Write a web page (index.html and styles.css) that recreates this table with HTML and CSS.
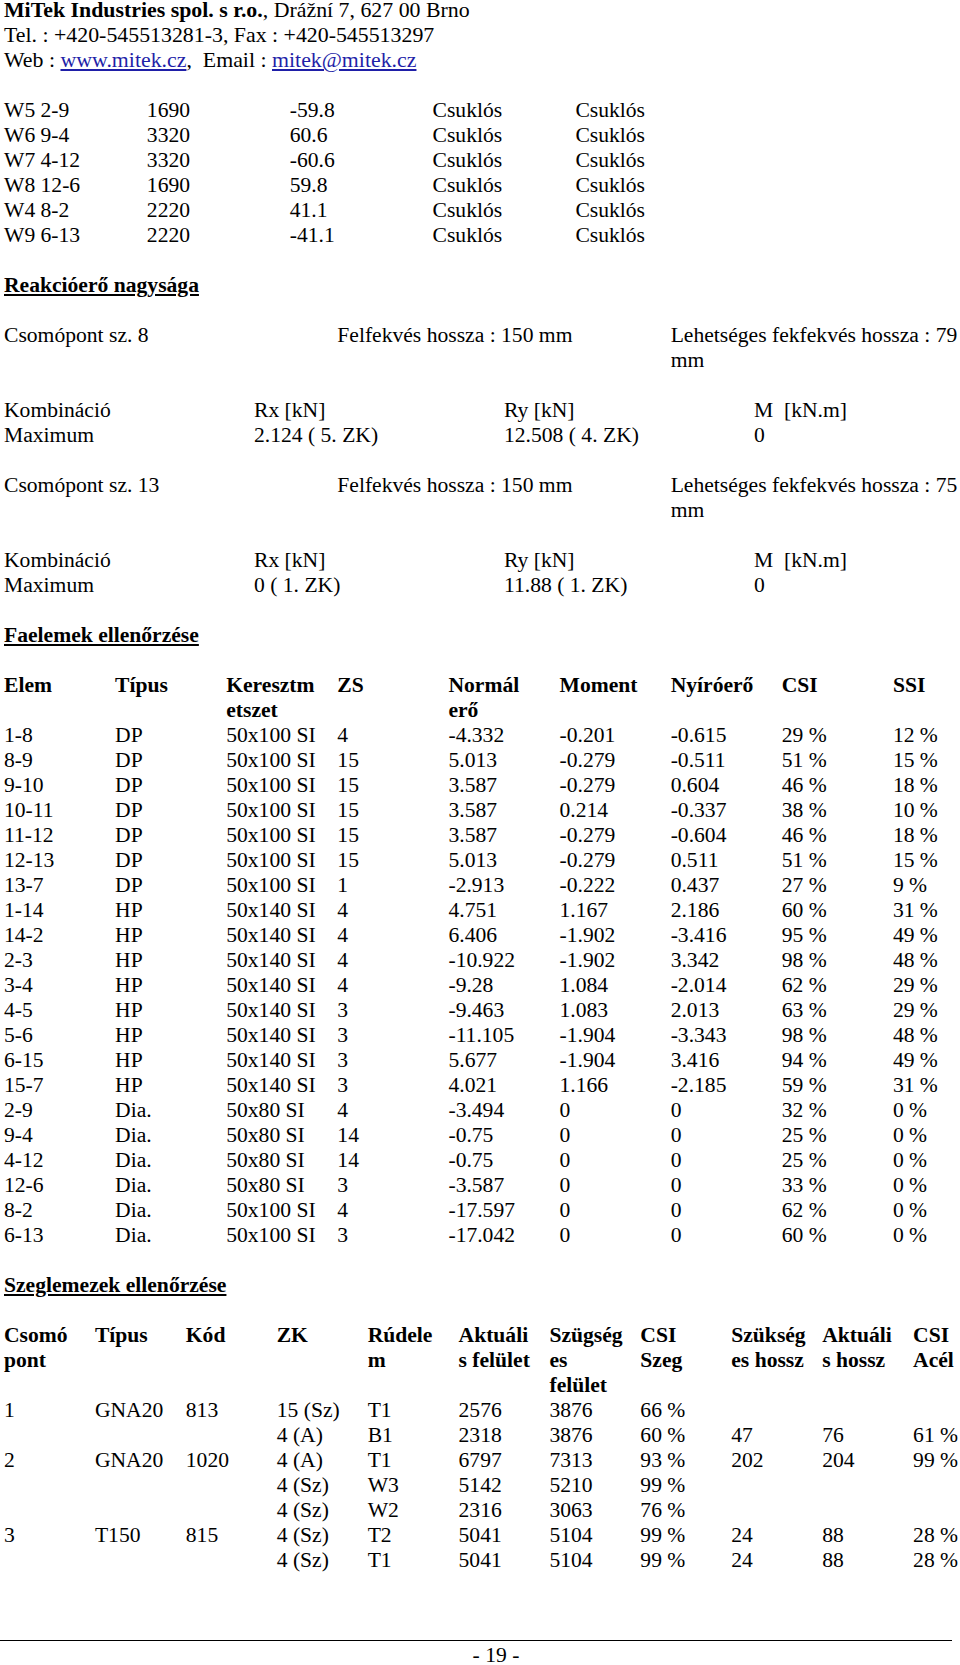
FILE: index.html
```html
<!DOCTYPE html>
<html lang="hu">
<head>
<meta charset="utf-8">
<title>MiTek - 19</title>
<link rel="stylesheet" href="styles.css">
</head>
<body>
<div class="page">
  <div class="hdr">
    <div class="line"><b>MiTek Industries spol. s r.o.</b>, Drážní 7, 627 00 Brno</div>
    <div class="line">Tel. : +420-545513281-3, Fax : +420-545513297</div>
    <div class="line">Web : <a class="lnk">www.mitek.cz</a>,&nbsp; Email : <a class="lnk">mitek@mitek.cz</a></div>
  </div>

  <div class="grid g7 gap">
    <div>W5 2-9</div><div>1690</div><div>-59.8</div><div>Csuklós</div><div>Csuklós</div><div></div><div></div>
    <div>W6 9-4</div><div>3320</div><div>60.6</div><div>Csuklós</div><div>Csuklós</div><div></div><div></div>
    <div>W7 4-12</div><div>3320</div><div>-60.6</div><div>Csuklós</div><div>Csuklós</div><div></div><div></div>
    <div>W8 12-6</div><div>1690</div><div>59.8</div><div>Csuklós</div><div>Csuklós</div><div></div><div></div>
    <div>W4 8-2</div><div>2220</div><div>41.1</div><div>Csuklós</div><div>Csuklós</div><div></div><div></div>
    <div>W9 6-13</div><div>2220</div><div>-41.1</div><div>Csuklós</div><div>Csuklós</div><div></div><div></div>
  </div>

  <h2 class="sec gap">Reakcióerő nagysága</h2>

  <div class="grid g3 gap">
    <div>Csomópont sz. 8</div><div>Felfekvés hossza : 150 mm</div><div>Lehetséges fekfekvés hossza : 79<br>mm</div>
  </div>
  <div class="grid g4 gap">
    <div>Kombináció</div><div>Rx [kN]</div><div>Ry [kN]</div><div>M&nbsp; [kN.m]</div>
    <div>Maximum</div><div>2.124 ( 5. ZK)</div><div>12.508 ( 4. ZK)</div><div>0</div>
  </div>

  <div class="grid g3 gap">
    <div>Csomópont sz. 13</div><div>Felfekvés hossza : 150 mm</div><div>Lehetséges fekfekvés hossza : 75<br>mm</div>
  </div>
  <div class="grid g4 gap">
    <div>Kombináció</div><div>Rx [kN]</div><div>Ry [kN]</div><div>M&nbsp; [kN.m]</div>
    <div>Maximum</div><div>0 ( 1. ZK)</div><div>11.88 ( 1. ZK)</div><div>0</div>
  </div>

  <h2 class="sec gap">Faelemek ellenőrzése</h2>

  <div class="grid g9 gap">
    <div class="th">Elem</div><div class="th">Típus</div><div class="th">Keresztm<br>etszet</div><div class="th">ZS</div><div class="th">Normál<br>erő</div><div class="th">Moment</div><div class="th">Nyíróerő</div><div class="th">CSI</div><div class="th">SSI</div>
    <div>1-8</div><div>DP</div><div>50x100 SI</div><div>4</div><div>-4.332</div><div>-0.201</div><div>-0.615</div><div>29 %</div><div>12 %</div>
    <div>8-9</div><div>DP</div><div>50x100 SI</div><div>15</div><div>5.013</div><div>-0.279</div><div>-0.511</div><div>51 %</div><div>15 %</div>
    <div>9-10</div><div>DP</div><div>50x100 SI</div><div>15</div><div>3.587</div><div>-0.279</div><div>0.604</div><div>46 %</div><div>18 %</div>
    <div>10-11</div><div>DP</div><div>50x100 SI</div><div>15</div><div>3.587</div><div>0.214</div><div>-0.337</div><div>38 %</div><div>10 %</div>
    <div>11-12</div><div>DP</div><div>50x100 SI</div><div>15</div><div>3.587</div><div>-0.279</div><div>-0.604</div><div>46 %</div><div>18 %</div>
    <div>12-13</div><div>DP</div><div>50x100 SI</div><div>15</div><div>5.013</div><div>-0.279</div><div>0.511</div><div>51 %</div><div>15 %</div>
    <div>13-7</div><div>DP</div><div>50x100 SI</div><div>1</div><div>-2.913</div><div>-0.222</div><div>0.437</div><div>27 %</div><div>9 %</div>
    <div>1-14</div><div>HP</div><div>50x140 SI</div><div>4</div><div>4.751</div><div>1.167</div><div>2.186</div><div>60 %</div><div>31 %</div>
    <div>14-2</div><div>HP</div><div>50x140 SI</div><div>4</div><div>6.406</div><div>-1.902</div><div>-3.416</div><div>95 %</div><div>49 %</div>
    <div>2-3</div><div>HP</div><div>50x140 SI</div><div>4</div><div>-10.922</div><div>-1.902</div><div>3.342</div><div>98 %</div><div>48 %</div>
    <div>3-4</div><div>HP</div><div>50x140 SI</div><div>4</div><div>-9.28</div><div>1.084</div><div>-2.014</div><div>62 %</div><div>29 %</div>
    <div>4-5</div><div>HP</div><div>50x140 SI</div><div>3</div><div>-9.463</div><div>1.083</div><div>2.013</div><div>63 %</div><div>29 %</div>
    <div>5-6</div><div>HP</div><div>50x140 SI</div><div>3</div><div>-11.105</div><div>-1.904</div><div>-3.343</div><div>98 %</div><div>48 %</div>
    <div>6-15</div><div>HP</div><div>50x140 SI</div><div>3</div><div>5.677</div><div>-1.904</div><div>3.416</div><div>94 %</div><div>49 %</div>
    <div>15-7</div><div>HP</div><div>50x140 SI</div><div>3</div><div>4.021</div><div>1.166</div><div>-2.185</div><div>59 %</div><div>31 %</div>
    <div>2-9</div><div>Dia.</div><div>50x80 SI</div><div>4</div><div>-3.494</div><div>0</div><div>0</div><div>32 %</div><div>0 %</div>
    <div>9-4</div><div>Dia.</div><div>50x80 SI</div><div>14</div><div>-0.75</div><div>0</div><div>0</div><div>25 %</div><div>0 %</div>
    <div>4-12</div><div>Dia.</div><div>50x80 SI</div><div>14</div><div>-0.75</div><div>0</div><div>0</div><div>25 %</div><div>0 %</div>
    <div>12-6</div><div>Dia.</div><div>50x80 SI</div><div>3</div><div>-3.587</div><div>0</div><div>0</div><div>33 %</div><div>0 %</div>
    <div>8-2</div><div>Dia.</div><div>50x100 SI</div><div>4</div><div>-17.597</div><div>0</div><div>0</div><div>62 %</div><div>0 %</div>
    <div>6-13</div><div>Dia.</div><div>50x100 SI</div><div>3</div><div>-17.042</div><div>0</div><div>0</div><div>60 %</div><div>0 %</div>
  </div>

  <h2 class="sec gap">Szeglemezek ellenőrzése</h2>

  <div class="grid g11 gap">
    <div class="th">Csomó<br>pont</div><div class="th">Típus</div><div class="th">Kód</div><div class="th">ZK</div><div class="th">Rúdele<br>m</div><div class="th">Aktuáli<br>s felület</div><div class="th">Szügség<br>es<br>felület</div><div class="th">CSI<br>Szeg</div><div class="th">Szükség<br>es hossz</div><div class="th">Aktuáli<br>s hossz</div><div class="th">CSI<br>Acél</div>
    <div>1</div><div>GNA20</div><div>813</div><div>15 (Sz)</div><div>T1</div><div>2576</div><div>3876</div><div>66 %</div><div></div><div></div><div></div>
    <div></div><div></div><div></div><div>4 (A)</div><div>B1</div><div>2318</div><div>3876</div><div>60 %</div><div>47</div><div>76</div><div>61 %</div>
    <div>2</div><div>GNA20</div><div>1020</div><div>4 (A)</div><div>T1</div><div>6797</div><div>7313</div><div>93 %</div><div>202</div><div>204</div><div>99 %</div>
    <div></div><div></div><div></div><div>4 (Sz)</div><div>W3</div><div>5142</div><div>5210</div><div>99 %</div><div></div><div></div><div></div>
    <div></div><div></div><div></div><div>4 (Sz)</div><div>W2</div><div>2316</div><div>3063</div><div>76 %</div><div></div><div></div><div></div>
    <div>3</div><div>T150</div><div>815</div><div>4 (Sz)</div><div>T2</div><div>5041</div><div>5104</div><div>99 %</div><div>24</div><div>88</div><div>28 %</div>
    <div></div><div></div><div></div><div>4 (Sz)</div><div>T1</div><div>5041</div><div>5104</div><div>99 %</div><div>24</div><div>88</div><div>28 %</div>
  </div>

  <div class="footer">
    <div class="rule"></div>
    <div class="pageno">- 19 -</div>
  </div>
</div>
</body>
</html>
```
FILE: styles.css
```css
html, body {
  margin: 0;
  padding: 0;
  background: #ffffff;
  overflow: hidden;
}
body {
  font-family: "Liberation Serif", "Times New Roman", serif;
  font-size: 21.6px;
  line-height: 25px;
  color: #000000;
}
.page {
  width: 1000px;
  margin-left: 4px;
  margin-top: -2px;
}
.hdr {
  font-size: 21.85px;
}
.line {
  white-space: nowrap;
}
.lnk {
  color: #1f1fa8;
  text-decoration: underline;
}
.gap {
  margin-top: 25px;
}
.grid {
  display: grid;
  white-space: nowrap;
}
.g7 { grid-template-columns: repeat(7, minmax(0, 1fr)); }
.g3 { grid-template-columns: repeat(3, minmax(0, 1fr)); }
.g4 { grid-template-columns: repeat(4, minmax(0, 1fr)); }
.g9 { grid-template-columns: repeat(9, minmax(0, 1fr)); }
.g11 { grid-template-columns: repeat(11, minmax(0, 1fr)); }
.sec {
  font-size: 21.6px;
  line-height: 25px;
  font-weight: bold;
  text-decoration: underline;
  margin-bottom: 0;
  margin-left: 0;
}
.th {
  font-weight: bold;
}
.footer {
  margin-top: 67px;
  width: 952px;
  margin-left: -4px;
}
.rule {
  border-top: 1px solid #000000;
}
.pageno {
  text-align: center;
  padding-left: 40px;
  padding-top: 2px;
}
```
